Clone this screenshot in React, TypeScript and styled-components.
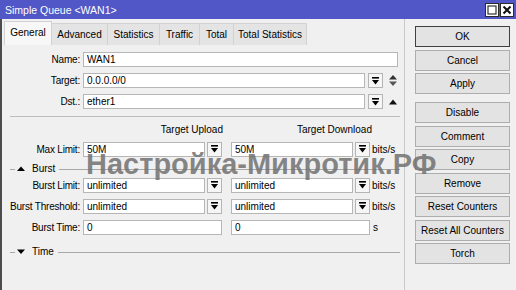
import React from 'react';
import styled, { createGlobalStyle } from 'styled-components';

const Global = createGlobalStyle`
  html, body { margin: 0; padding: 0; background: #f0f0f0; }
  body { font-family: "Liberation Sans", Arial, sans-serif; font-size: 10px; color: #000; }
  * { box-sizing: border-box; }
`;

const Window = styled.div`
  position: relative;
  width: 516px;
  height: 290px;
  overflow: hidden;
  background: #f0f0f0;
  display: flex;
  flex-direction: column;
`;

const TitleBar = styled.div`
  height: 19px;
  flex: none;
  background: #5157c6;
  display: flex;
  align-items: center;
  padding: 0 2px 0 5px;
  color: #fff;
`;

const Title = styled.span`
  flex: 1;
  font-size: 10.5px;
`;

const WinButtons = styled.div`
  display: flex;
  gap: 1px;
`;

const WinButton = styled.div`
  width: 14px;
  height: 14px;
  background: #fff;
  border: 1px solid #2a2a2a;
  display: flex;
  align-items: center;
  justify-content: center;
`;

const Body = styled.div`
  flex: 1;
  display: flex;
  border-left: 2px solid #4c4c4c;
`;

const Main = styled.div`
  width: 403px;
  flex: none;
  display: flex;
  flex-direction: column;
  border-right: 1px solid #c8c8c8;
`;

const TabStrip = styled.div`
  height: 26px;
  flex: none;
  display: flex;
  align-items: flex-end;
  padding-left: 3px;
`;

const Tab = styled.div<{ $active?: boolean; $w: number }>`
  width: ${(p) => p.$w}px;
  height: ${(p) => (p.$active ? 24 : 22)}px;
  display: flex;
  align-items: center;
  justify-content: center;
  padding-bottom: ${(p) => (p.$active ? 2 : 0)}px;
  background: ${(p) => (p.$active ? '#f7f7f7' : '#e4e4e4')};
  border: 1px solid #d2d2d2;
  border-bottom: none;
  margin-left: -1px;
  white-space: nowrap;
`;

const Panel = styled.div`
  flex: 1;
  display: flex;
  flex-direction: column;
  padding-top: 4px;
`;

const Row = styled.div<{ $h?: number }>`
  height: ${(p) => p.$h ?? 21}px;
  display: flex;
  align-items: center;
  flex: none;
`;

const Label = styled.span`
  width: 78px;
  text-align: right;
  margin-right: 3px;
  white-space: nowrap;
  letter-spacing: -0.2px;
`;

const Input = styled.div<{ $w?: number }>`
  height: 15px;
  ${(p) => (p.$w ? `width: ${p.$w}px; flex: none;` : 'flex: 1;')}
  background: #fff;
  border: 1px solid #b6b6b6;
  padding-left: 3px;
  line-height: 13px;
  white-space: nowrap;
  overflow: hidden;
`;

const DropBtn = styled.div`
  width: 15px;
  height: 15px;
  flex: none;
  border: 1px solid #b4b4b4;
  background: #f6f6f6;
  display: flex;
  align-items: center;
  justify-content: center;
`;

const Col = styled.div`
  width: 139px;
  flex: none;
  display: flex;
  gap: 2px;
`;

const Cols = styled.div`
  display: flex;
  gap: 9px;
  align-items: center;
`;

const Unit = styled.span`
  margin-left: 2px;
  white-space: nowrap;
`;

const Side = styled.span<{ $ml: number }>`
  margin-left: ${(p) => p.$ml}px;
  display: flex;
  align-items: center;
`;

const Separator = styled.div`
  height: 1px;
  flex: none;
  background: #bdbdbd;
  margin: 3.5px 4px 0 8px;
`;

const ColHeaders = styled.div`
  height: 22px;
  flex: none;
  display: flex;
  align-items: flex-end;
  padding: 0 0 3px 81px;
  gap: 9px;
  line-height: 12px;
`;

const ColHeader = styled.span`
  width: 140px;
  text-align: right;
  white-space: nowrap;
`;

const Section = styled.div<{ $pt: number; $h: number }>`
  height: ${(p) => p.$h}px;
  flex: none;
  padding: ${(p) => p.$pt}px 4px 0 8px;
  display: flex;
  align-items: flex-start;
`;

const SectionInner = styled.div`
  height: 12px;
  flex: 1;
  display: flex;
  align-items: center;
  line-height: 12px;
`;

const Rule = styled.div<{ $w?: number }>`
  height: 1px;
  background: #a8a8a8;
  ${(p) => (p.$w ? `width: ${p.$w}px; flex: none;` : 'flex: 1;')}
`;

const SectionTitle = styled.span`
  margin: 0 4px 0 7px;
`;

const Buttons = styled.div`
  flex: 1;
  display: flex;
  flex-direction: column;
  padding: 7px 0 0 10px;
`;

const Button = styled.div<{ $mt?: number; $default?: boolean }>`
  width: 95px;
  height: 21px;
  flex: none;
  margin-top: ${(p) => p.$mt ?? 2.5}px;
  border: 1px solid ${(p) => (p.$default ? '#404040' : '#adadad')};
  background: #e3e3e3;
  display: flex;
  align-items: center;
  justify-content: center;
  white-space: nowrap;
  &:first-child { margin-top: 0; }
`;

const Watermark = styled.div`
  position: absolute;
  left: 86px;
  top: 150px;
  font-family: "Liberation Sans", Arial, sans-serif;
  font-weight: bold;
  font-size: 29px;
  line-height: 29px;
  color: rgba(112, 112, 112, 0.85);
  white-space: nowrap;
  pointer-events: none;
`;

const DropIcon = () => (
  <svg width="7" height="8" viewBox="0 0 7 8">
    <rect x="0" y="0" width="7" height="1.6" fill="#000" />
    <polygon points="0,3 7,3 3.5,7.5" fill="#000" />
  </svg>
);

const UpDownIcon = () => (
  <svg width="8" height="13" viewBox="0 0 8 13">
    <polygon points="0,5.5 8,5.5 4,1" fill="#333" />
    <polygon points="0,7.5 8,7.5 4,12" fill="#555" />
  </svg>
);

const UpIcon = () => (
  <svg width="8" height="6" viewBox="0 0 8 6">
    <polygon points="0,5.5 8,5.5 4,0.5" fill="#111" />
  </svg>
);

const TriUp = () => (
  <svg width="8" height="6" viewBox="0 0 8 6">
    <polygon points="0,5 8,5 4,0.5" fill="#000" />
  </svg>
);

const TriDown = () => (
  <svg width="8" height="6" viewBox="0 0 8 6">
    <polygon points="0,0.5 8,0.5 4,5" fill="#000" />
  </svg>
);

const tabs: [string, number][] = [
  ['General', 48],
  ['Advanced', 57],
  ['Statistics', 53],
  ['Traffic', 41],
  ['Total', 35],
  ['Total Statistics', 74],
];

const buttons: [string, number?][] = [
  ['OK'],
  ['Cancel'],
  ['Apply'],
  ['Disable', 8],
  ['Comment'],
  ['Copy'],
  ['Remove'],
  ['Reset Counters'],
  ['Reset All Counters'],
  ['Torch'],
];

const DualRow = ({ label, a, b, unit }: { label: string; a: string; b: string; unit: string }) => (
  <Row>
    <Label>{label}</Label>
    <Cols>
      <Col>
        <Input>{a}</Input>
        <DropBtn>
          <DropIcon />
        </DropBtn>
      </Col>
      <Col>
        <Input>{b}</Input>
        <DropBtn>
          <DropIcon />
        </DropBtn>
      </Col>
    </Cols>
    <Unit>{unit}</Unit>
  </Row>
);

export default function App() {
  return (
    <>
      <Global />
      <Window>
        <TitleBar>
          <Title>Simple Queue &lt;WAN1&gt;</Title>
          <WinButtons>
            <WinButton>
              <svg width="10" height="10" viewBox="0 0 10 10">
                <rect x="1" y="1" width="8" height="8" fill="none" stroke="#333" strokeWidth="1.2" />
              </svg>
            </WinButton>
            <WinButton>
              <svg width="10" height="10" viewBox="0 0 10 10">
                <path d="M1.5 1.5 L8.5 8.5 M8.5 1.5 L1.5 8.5" stroke="#111" strokeWidth="2" />
              </svg>
            </WinButton>
          </WinButtons>
        </TitleBar>
        <Body>
          <Main>
            <TabStrip>
              {tabs.map(([t, w], i) => (
                <Tab key={t} $w={w} $active={i === 0}>
                  {t}
                </Tab>
              ))}
            </TabStrip>
            <Panel>
              <Row>
                <Label>Name:</Label>
                <Input $w={315}>WAN1</Input>
              </Row>
              <Row>
                <Label>Target:</Label>
                <Input $w={282}>0.0.0.0/0</Input>
                <Side $ml={3}>
                  <DropBtn>
                    <DropIcon />
                  </DropBtn>
                </Side>
                <Side $ml={6}>
                  <UpDownIcon />
                </Side>
              </Row>
              <Row>
                <Label>Dst.:</Label>
                <Input $w={282}>ether1</Input>
                <Side $ml={3}>
                  <DropBtn>
                    <DropIcon />
                  </DropBtn>
                </Side>
                <Side $ml={6}>
                  <UpIcon />
                </Side>
              </Row>
              <Separator />
              <ColHeaders>
                <ColHeader>Target Upload</ColHeader>
                <ColHeader>Target Download</ColHeader>
              </ColHeaders>
              <DualRow label="Max Limit:" a="50M" b="50M" unit="bits/s" />
              <Section $pt={3.5} $h={15}>
                <SectionInner>
                  <Rule $w={5} />
                  <Side $ml={2}>
                    <TriUp />
                  </Side>
                  <SectionTitle>Burst</SectionTitle>
                  <Rule />
                </SectionInner>
              </Section>
              <DualRow label="Burst Limit:" a="unlimited" b="unlimited" unit="bits/s" />
              <DualRow label="Burst Threshold:" a="unlimited" b="unlimited" unit="bits/s" />
              <Row>
                <Label>Burst Time:</Label>
                <Cols>
                  <Col>
                    <Input>0</Input>
                  </Col>
                  <Col>
                    <Input>0</Input>
                  </Col>
                </Cols>
                <Unit style={{ marginLeft: 3 }}>s</Unit>
              </Row>
              <Section $pt={8.5} $h={22}>
                <SectionInner>
                  <Rule $w={5} />
                  <Side $ml={2}>
                    <TriDown />
                  </Side>
                  <SectionTitle>Time</SectionTitle>
                  <Rule />
                </SectionInner>
              </Section>
            </Panel>
          </Main>
          <Buttons>
            {buttons.map(([t, mt], i) => (
              <Button key={t} $mt={mt} $default={i === 0}>
                {t}
              </Button>
            ))}
          </Buttons>
        </Body>
        <Watermark>Настройка-Микротик.РФ</Watermark>
      </Window>
    </>
  );
}
